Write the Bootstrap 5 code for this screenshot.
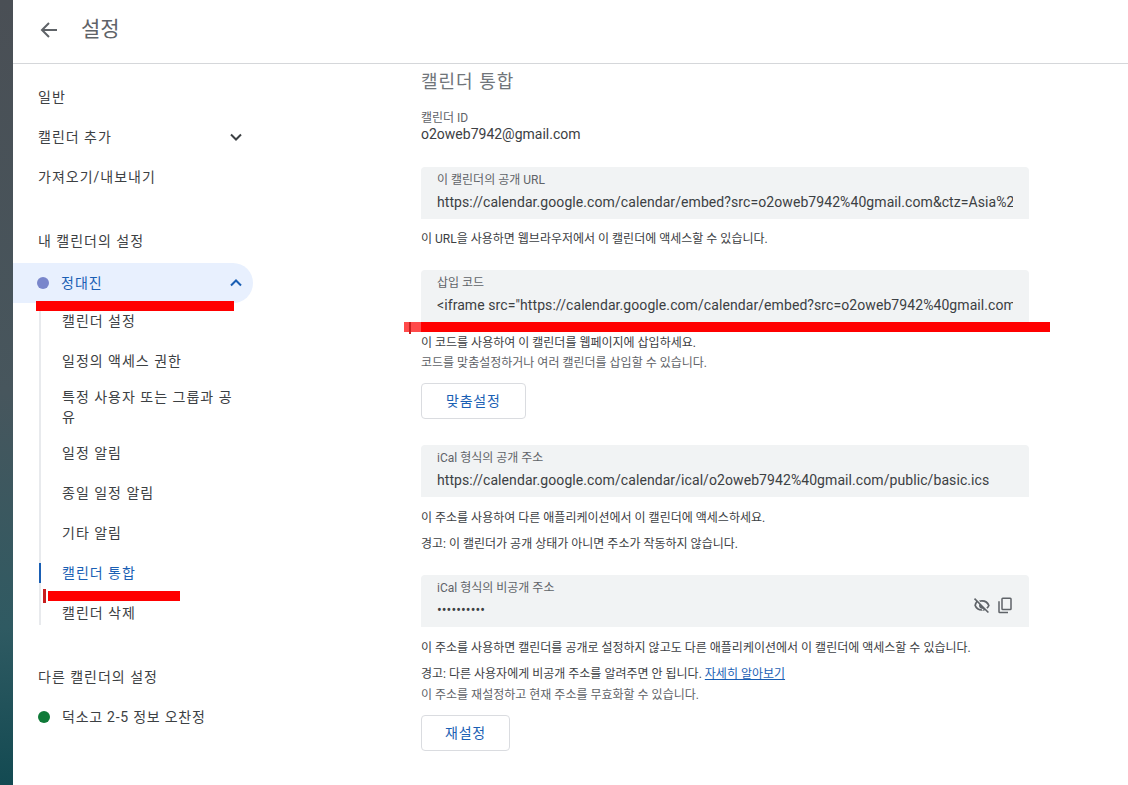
<!DOCTYPE html>
<html lang="ko">
<head>
  <meta charset="UTF-8" />
  <meta name="viewport" content="width=device-width, initial-scale=1.0" />
  <title>설정</title>
  <link href="https://cdn.jsdelivr.net/npm/bootstrap@5.3.3/dist/css/bootstrap.min.css" rel="stylesheet" />
  <style>
    html, body { height: 100%; }
    body {
      font-family: Roboto, "Noto Sans CJK KR", sans-serif;
      color: #3c4043;
      font-size: 14px;
      overflow: hidden;
      background: #fff;
    }
    .page-wrap { position: relative; height: 785px; }
    .desk-strip {
      width: 13px;
      flex: none;
      background: linear-gradient(180deg, #4a4f55 0%, #47565d 50%, #2f5a62 80%, #134a52 100%);
    }
    .top-bar { height: 64px; padding-left: 26px; padding-bottom: 4px; border-bottom: 1px solid #d5d7da; }
    .top-title { font-size: 21px; color: #5f6368; margin-left: 22px; }
    .side-col { width: 240px; flex: none; padding-top: 13px; letter-spacing: 1px; }
    .side-item { height: 40px; padding-left: 25px; padding-right: 11px; display: flex; align-items: center; justify-content: space-between; }
    .side-head { height: 40px; padding-left: 25px; display: flex; align-items: center; }
    .side-gap { height: 24px; }
    .side-gap-wide { height: 32px; }
    .side-open { background: #e8f0fe; color: #1a5fb4; border-radius: 0 20px 20px 0; padding-left: 24px; margin-top: 2px; margin-bottom: -2px; }
    .side-last { letter-spacing: .75px; }
    .dot { width: 12px; height: 12px; border-radius: 50%; flex: none; margin-right: 12px; }
    .sub-list { margin-left: 26px; border-left: 2px solid #e8eaed; width: 205px; }
    .sub-item { position: relative; padding: 10px 0 10px 21px; line-height: 20px; }
    .sub-item.two-line { padding-top: 6px; padding-bottom: 6px; }
    .sub-item.tail { padding-bottom: 2px; }
    .sub-item.on { color: #1a5fb4; }
    .sub-item.on::before { content: ""; position: absolute; left: -2px; top: 10px; width: 2px; height: 20px; background: #1a5fb4; }
    .main-col { padding-left: 168px; width: 776px; }
    .main-title { font-size: 18px; letter-spacing: 1px; color: #70757a; line-height: 24px; margin: 6px 0 0; font-weight: 400; }
    .id-label { font-size: 12px; line-height: 13px; color: #5f6368; margin-top: 18px; }
    .id-value { line-height: 18px; }
    .url-field { width: 608px; height: 52px; background: #f1f3f4; border-radius: 4px 4px 0 0; padding: 5px 16px 0; }
    .url-label { font-size: 12px; line-height: 16px; color: #5f6368; }
    .url-value { line-height: 20px; margin-top: 4px; letter-spacing: .08px; white-space: nowrap; overflow: hidden; width: 576px; }
    .url-tools { padding-top: 3px; margin-right: -1px; }
    .help-line { font-size: 12px; line-height: 16px; }
    .help-gray { color: #5f6368; }
    .help-line a { color: #1a5fb4; }
    .act-btn {
      font-size: 14px; letter-spacing: .8px; color: #1a5fb4; background: #fff; border: 1px solid #dadce0;
      border-radius: 4px; height: 36px; padding: 0 24px; line-height: 1; display: block;
    }
    .act-btn.short { padding: 0 23px; }
    .gap-a { margin-top: 4px; }
    .gap-a2 { margin-top: 5px; }
    .gap-b { margin-top: 10px; }
    .gap-c { margin-top: 12px; }
    .gap-d { margin-top: 13px; }
    .gap-e { margin-top: 23px; }
    .gap-f { margin-top: 26px; }
    .red-mark { position: absolute; background: #f00; }
    .red-soft { position: absolute; background: #ff4a4a; }
    .red-tick { position: absolute; background: #c81e1e; }
  </style>
</head>
<body>
  <div class="page-wrap d-flex">
    <div class="desk-strip"></div>
    <div class="flex-grow-1">
      <div class="top-bar d-flex align-items-center">
        <svg width="20" height="20" viewBox="0 0 20 20" fill="none" stroke="#5f6368" stroke-width="2"><path d="M18 10H3M10 3l-7 7 7 7"/></svg>
        <span class="top-title">설정</span>
      </div>
      <div class="d-flex">
        <nav class="side-col">
          <div class="side-item">일반</div>
          <div class="side-item">캘린더 추가
            <svg width="12" height="8" viewBox="0 0 12 8" fill="none" stroke="#3c4043" stroke-width="2"><path d="M1 1.500l5 5 5-5"/></svg>
          </div>
          <div class="side-item">가져오기/내보내기</div>
          <div class="side-gap"></div>
          <div class="side-head">내 캘린더의 설정</div>
          <div class="side-item side-open">
            <span class="d-flex align-items-center"><span class="dot" style="background:#7986cb"></span>정대진</span>
            <svg width="12" height="8" viewBox="0 0 12 8" fill="none" stroke="#1a5fb4" stroke-width="2"><path d="M1 6.500l5-5 5 5"/></svg>
          </div>
          <div class="sub-list">
            <div class="sub-item">캘린더 설정</div>
            <div class="sub-item">일정의 액세스 권한</div>
            <div class="sub-item two-line">특정 사용자 또는 그룹과 공유</div>
            <div class="sub-item">일정 알림</div>
            <div class="sub-item">종일 일정 알림</div>
            <div class="sub-item">기타 알림</div>
            <div class="sub-item on">캘린더 통합</div>
            <div class="sub-item tail">캘린더 삭제</div>
          </div>
          <div class="side-gap-wide"></div>
          <div class="side-head">다른 캘린더의 설정</div>
          <div class="side-item side-last justify-content-start">
            <span class="dot" style="background:#0f7a38"></span>덕소고 2-5 정보 오찬정
          </div>
        </nav>
        <main class="main-col">
          <h2 class="main-title">캘린더 통합</h2>
          <div class="id-label">캘린더 ID</div>
          <div class="id-value">o2oweb7942@gmail.com</div>

          <div class="url-field mt-4">
            <div class="url-label">이 캘린더의 공개 URL</div>
            <div class="url-value">https://calendar.google.com/calendar/embed?src=o2oweb7942%40gmail.com&amp;ctz=Asia%2</div>
          </div>
          <div class="help-line gap-c">이 URL을 사용하면 웹브라우저에서 이 캘린더에 액세스할 수 있습니다.</div>

          <div class="url-field gap-e">
            <div class="url-label">삽입 코드</div>
            <div class="url-value">&lt;iframe src="https://calendar.google.com/calendar/embed?src=o2oweb7942%40gmail.com</div>
          </div>
          <div class="help-line gap-d">이 코드를 사용하여 이 캘린더를 웹페이지에 삽입하세요.</div>
          <div class="help-line help-gray gap-a">코드를 맞춤설정하거나 여러 캘린더를 삽입할 수 있습니다.</div>
          <button type="button" class="btn act-btn gap-c">맞춤설정</button>

          <div class="url-field gap-f">
            <div class="url-label">iCal 형식의 공개 주소</div>
            <div class="url-value">https://calendar.google.com/calendar/ical/o2oweb7942%40gmail.com/public/basic.ics</div>
          </div>
          <div class="help-line gap-d">이 주소를 사용하여 다른 애플리케이션에서 이 캘린더에 액세스하세요.</div>
          <div class="help-line gap-b">경고: 이 캘린더가 공개 상태가 아니면 주소가 작동하지 않습니다.</div>

          <div class="url-field gap-e d-flex justify-content-between">
            <div>
              <div class="url-label">iCal 형식의 비공개 주소</div>
              <div class="url-value" style="width:auto">••••••••••</div>
            </div>
            <div class="url-tools d-flex align-items-center gap-1">
              <svg width="20" height="20" viewBox="0 0 24 24" fill="#5f6368"><path d="M12 6a9.800 9.800 0 0 1 9.300 6.500 10 10 0 0 1-2.700 4l-1.400-1.400a8 8 0 0 0 1.900-2.600A8 8 0 0 0 12 8c-.7 0-1.400.1-2 .3L8.400 6.700A10.500 10.500 0 0 1 12 6zM3.700 3.600 2.300 5l2.600 2.600A10.700 10.700 0 0 0 2.700 12.500 9.800 9.800 0 0 0 12 19a10 10 0 0 0 3.600-.7l3.400 3.400 1.400-1.400zM12 17a8 8 0 0 1-7.100-4.500 8 8 0 0 1 1.500-3.400l2.300 2.300a3.700 3.700 0 0 0 3.900 5.100l1.500 1.500c-.7.300-1.400.5-2.100.5z"/></svg>
              <svg width="18" height="18" viewBox="0 0 24 24" fill="#5f6368"><path d="M9 2h10a2 2 0 0 1 2 2v13a2 2 0 0 1-2 2H9a2 2 0 0 1-2-2V4a2 2 0 0 1 2-2zm0 2v13h10V4zM3 7h2v14h11v2H5a2 2 0 0 1-2-2z"/></svg>
            </div>
          </div>
          <div class="help-line gap-d">이 주소를 사용하면 캘린더를 공개로 설정하지 않고도 다른 애플리케이션에서 이 캘린더에 액세스할 수 있습니다.</div>
          <div class="help-line gap-b">경고: 다른 사용자에게 비공개 주소를 알려주면 안 됩니다. <a href="#">자세히 알아보기</a></div>
          <div class="help-line help-gray gap-a2">이 주소를 재설정하고 현재 주소를 무효화할 수 있습니다.</div>
          <button type="button" class="btn act-btn short gap-c">재설정</button>
        </main>
      </div>
    </div>
    <!-- 빨간 펜 표시 -->
    <div class="red-mark" style="left:36px;top:301px;width:198px;height:10px"></div>
    <div class="red-mark" style="left:421px;top:322px;width:629px;height:10px"></div>
    <div class="red-soft" style="left:404px;top:322px;width:17px;height:10px"></div>
    <div class="red-tick" style="left:409px;top:322px;width:2px;height:12px"></div>
    <div class="red-mark" style="left:48px;top:591px;width:132px;height:10px"></div>
    <div class="red-tick" style="left:43px;top:589px;width:3px;height:14px"></div>
  </div>
  <script src="https://cdn.jsdelivr.net/npm/bootstrap@5.3.3/dist/js/bootstrap.bundle.min.js"></script>
</body>
</html>
